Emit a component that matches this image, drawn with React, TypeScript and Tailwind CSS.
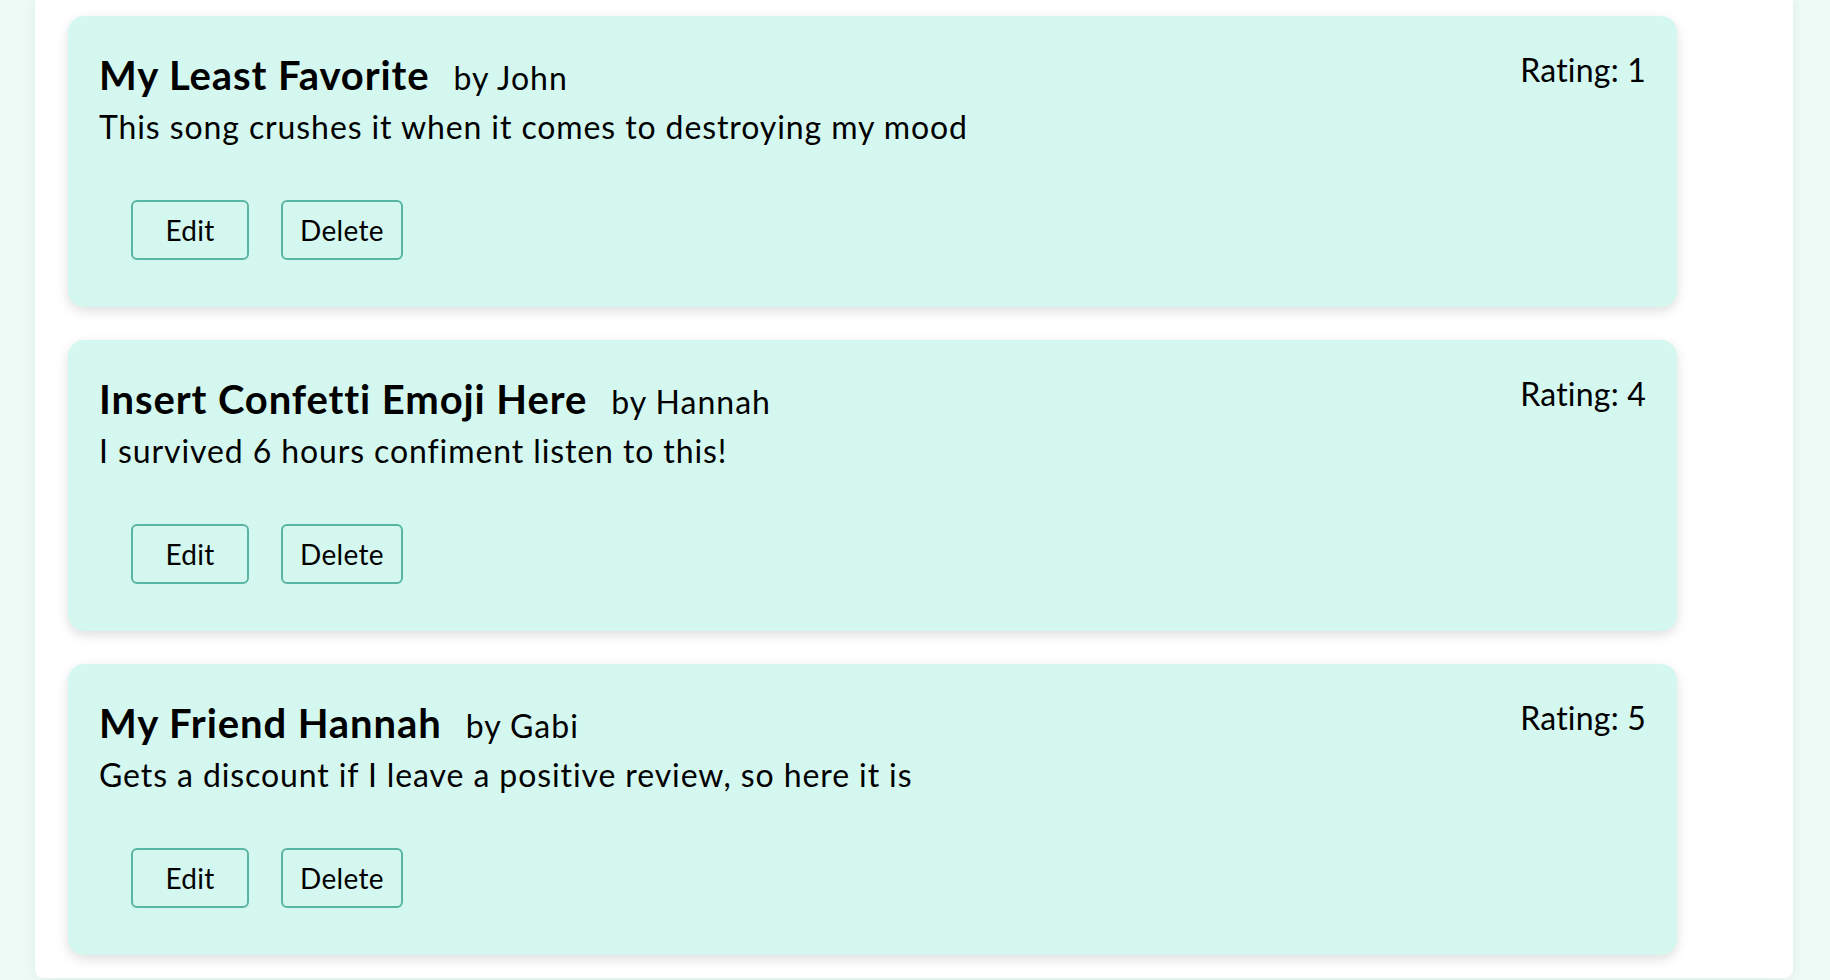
const reviews = [
  { title: "My Least Favorite", author: "John", rating: 1, body: "This song crushes it when it comes to destroying my mood" },
  { title: "Insert Confetti Emoji Here", author: "Hannah", rating: 4, body: "I survived 6 hours confiment listen to this!" },
  { title: "My Friend Hannah", author: "Gabi", rating: 5, body: "Gets a discount if I leave a positive review, so here it is" },
];

function ReviewCard({ title, author, rating, body }: (typeof reviews)[number]) {
  return (
    <div className="rounded-2xl bg-[#d4f8ef] shadow-[0_4px_12px_rgba(0,0,0,0.13)] pl-[31px] pr-[31px] pt-[35px] pb-[47px]">
      <div className="flex items-start justify-between">
        <div className="flex items-baseline">
          <h2 className="text-[40px] leading-[48px] font-bold tracking-[0.9px]">{title}</h2>
          <span className="ml-[24px] text-[32px] leading-[48px] tracking-[1px]">by {author}</span>
        </div>
        <div className="text-[32px] leading-[38px] tracking-[0.2px]">Rating: {rating}</div>
      </div>
      <p className="mt-[5px] text-[32px] leading-[40px] tracking-[0.9px]">{body}</p>
      <div className="mt-[53px] ml-[32px] flex gap-[32px]">
        <button className="h-[60px] min-w-[118px] rounded-md border-2 border-[#59b5a4] px-[17px] text-[28px] tracking-[0.3px]">
          Edit
        </button>
        <button className="h-[60px] min-w-[118px] rounded-md border-2 border-[#59b5a4] px-[17px] text-[28px] tracking-[0.3px]">
          Delete
        </button>
      </div>
    </div>
  );
}

export default function App() {
  return (
    <div className="flex h-[980px] overflow-hidden bg-[#eefaf6] font-['Lato',sans-serif] text-black">
      <div className="w-[35px] shrink-0" />
      <main className="flex-1 rounded-b-lg bg-white shadow-[0_0_12px_rgba(0,60,40,0.08)] pl-[33px] pr-[116px] pt-[16px] mb-[2px]">
        <div className="flex flex-col gap-[33px]">
          {reviews.map((r) => (
            <ReviewCard key={r.title} {...r} />
          ))}
        </div>
      </main>
      <div className="w-[37px] shrink-0" />
    </div>
  );
}
